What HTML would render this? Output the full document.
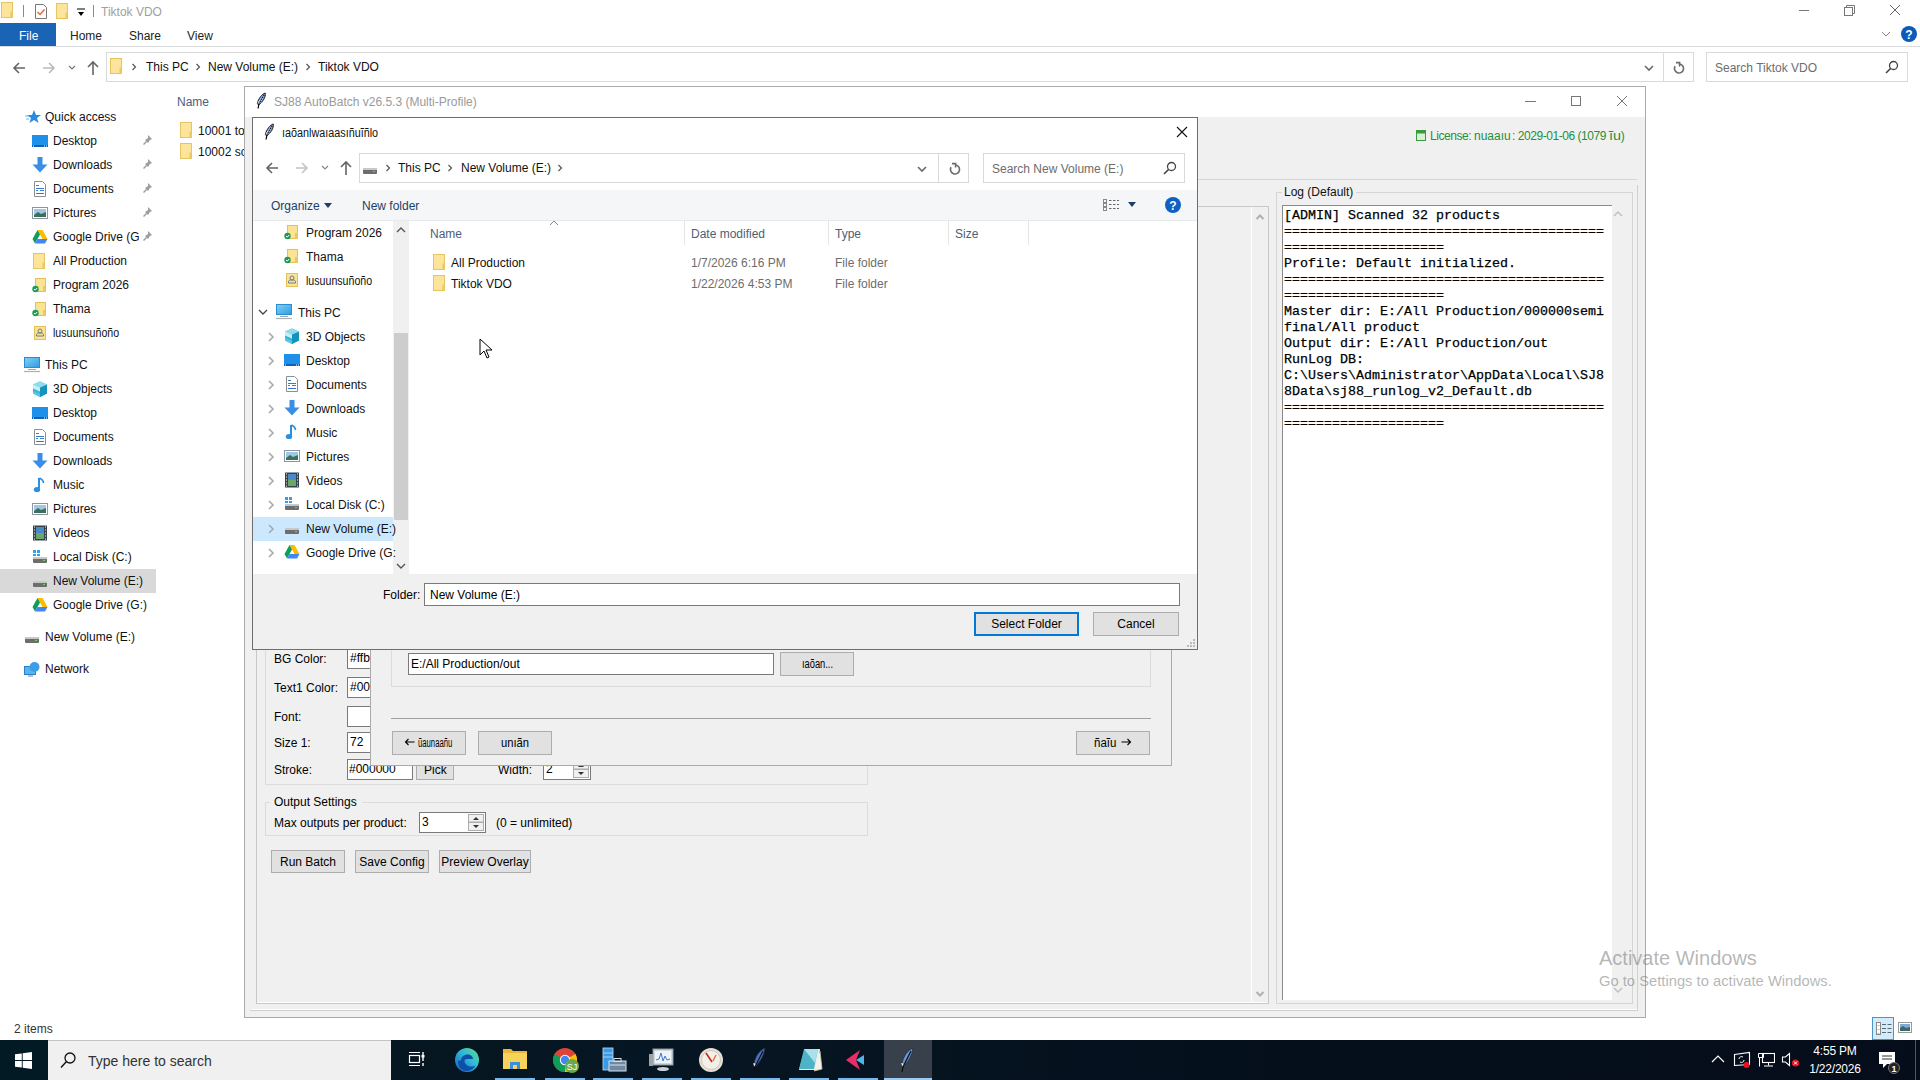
<!DOCTYPE html><html><head><meta charset="utf-8"><style>
*{margin:0;padding:0;box-sizing:border-box}
html,body{width:1920px;height:1080px;overflow:hidden;background:#fff;position:relative;font-family:"Liberation Sans",sans-serif;font-size:12px;color:#000}
.a{position:absolute}
.t{position:absolute;white-space:nowrap;line-height:16px;font-size:12px}
.m{position:absolute;white-space:pre;font-family:"Liberation Mono",monospace;font-size:13.33px;line-height:16px;color:#000;-webkit-text-stroke:0.25px #000}
</style></head><body>
<svg class="a" style="left:0px;top:2px;" width="16" height="16" viewBox="0 0 16 16"><rect x="1.5" y="0.5" width="11" height="15" fill="#fce49a" stroke="#e6c462"/><path d="M10.5 9.5h2.5v6.5h-2.5z" fill="#ecc95a"/></svg>
<div class="a" style="left:23px;top:5px;width:1px;height:12px;background:#8a8a8a"></div>
<svg class="a" style="left:34px;top:3px;" width="14" height="17" viewBox="0 0 14 17"><path d="M1.5 1.5h8l3 3v11h-11z" fill="#fff" stroke="#777"/><path d="M3.5 9l2.5 2.5 4.5-5" stroke="#e8653a" stroke-width="1.5" fill="none"/></svg>
<svg class="a" style="left:55px;top:3px;" width="16" height="16" viewBox="0 0 16 16"><rect x="1.5" y="0.5" width="11" height="15" fill="#fce49a" stroke="#e6c462"/><path d="M10.5 9.5h2.5v6.5h-2.5z" fill="#ecc95a"/></svg>
<svg class="a" style="left:76px;top:7px;" width="10" height="10" viewBox="0 0 10 10"><path d="M1 2h8" stroke="#000" stroke-width="1"/><path d="M2 5h6l-3 4z" fill="#000"/></svg>
<div class="a" style="left:93px;top:5px;width:1px;height:12px;background:#8a8a8a"></div>
<div class="t" style="left:101px;top:4px;color:#a0a0a0;font-size:12px">Tiktok VDO</div>
<div class="a" style="left:1799px;top:10px;width:10px;height:1px;background:#777"></div>
<svg class="a" style="left:1844px;top:5px;" width="11" height="11" viewBox="0 0 11 11"><rect x="0.5" y="2.5" width="8" height="8" fill="none" stroke="#777"/><path d="M2.5 2.5v-2h8v8h-2" fill="none" stroke="#777"/></svg>
<svg class="a" style="left:1889px;top:4px;" width="12" height="12" viewBox="0 0 12 12"><path d="M1 1l10 10M11 1L1 11" stroke="#666" stroke-width="1"/></svg>
<div class="a" style="left:0px;top:23px;width:56px;height:23px;background:#1a64b6"></div>
<div class="t" style="left:19px;top:28px;color:#fff">File</div>
<div class="t" style="left:70px;top:28px;color:#222">Home</div>
<div class="t" style="left:129px;top:28px;color:#222">Share</div>
<div class="t" style="left:187px;top:28px;color:#222">View</div>
<div class="a" style="left:0px;top:46px;width:1920px;height:1px;background:#dadbdc"></div>
<svg class="a" style="left:1881px;top:30px;" width="10" height="8" viewBox="0 0 10 8"><path d="M1 2l4 4 4-4" stroke="#888" fill="none"/></svg>
<svg class="a" style="left:1901px;top:26px;" width="16" height="16" viewBox="0 0 16 16"><circle cx="8" cy="8" r="8" fill="#0d5bb8"/><text x="8" y="12.5" text-anchor="middle" font-family="Liberation Sans" font-weight="bold" font-size="12" fill="#fff">?</text></svg>
<svg class="a" style="left:12px;top:61px;" width="14" height="14" viewBox="0 0 14 14"><path d="M13 7H2M7 2L2 7l5 5" stroke="#666" stroke-width="1.6" fill="none"/></svg>
<svg class="a" style="left:42px;top:61px;" width="14" height="14" viewBox="0 0 14 14"><path d="M1 7h11M7 2l5 5-5 5" stroke="#bbb" stroke-width="1.6" fill="none"/></svg>
<svg class="a" style="left:68px;top:65px;" width="8" height="6" viewBox="0 0 8 6"><path d="M1 1l3 3 3-3" stroke="#777" stroke-width="1.2" fill="none"/></svg>
<svg class="a" style="left:86px;top:60px;" width="14" height="16" viewBox="0 0 14 16"><path d="M7 15V2M2 7l5-5 5 5" stroke="#666" stroke-width="1.6" fill="none"/></svg>
<div class="a" style="left:106px;top:52px;width:1588px;height:30px;border:1px solid #d9d9d9;background:#fff"></div>
<svg class="a" style="left:109px;top:58px;" width="16" height="16" viewBox="0 0 16 16"><rect x="1.5" y="0.5" width="11" height="15" fill="#fce49a" stroke="#e6c462"/><path d="M10.5 9.5h2.5v6.5h-2.5z" fill="#ecc95a"/></svg>
<svg class="a" style="left:131px;top:63px;" width="6" height="8" viewBox="0 0 6 8"><path d="M1.5 1l3 3-3 3" stroke="#555" stroke-width="1.2" fill="none"/></svg>
<div class="t" style="left:146px;top:59px;color:#111">This PC</div>
<svg class="a" style="left:195px;top:63px;" width="6" height="8" viewBox="0 0 6 8"><path d="M1.5 1l3 3-3 3" stroke="#555" stroke-width="1.2" fill="none"/></svg>
<div class="t" style="left:208px;top:59px;color:#111">New Volume (E:)</div>
<svg class="a" style="left:305px;top:63px;" width="6" height="8" viewBox="0 0 6 8"><path d="M1.5 1l3 3-3 3" stroke="#555" stroke-width="1.2" fill="none"/></svg>
<div class="t" style="left:318px;top:59px;color:#111">Tiktok VDO</div>
<svg class="a" style="left:1644px;top:64px;" width="10" height="8" viewBox="0 0 10 8"><path d="M1 2l4 4 4-4" stroke="#6a6a6a" stroke-width="1.6" fill="none"/></svg>
<div class="a" style="left:1663px;top:52px;width:1px;height:30px;background:#d9d9d9"></div>
<svg class="a" style="left:1672px;top:60px;" width="14" height="14" viewBox="0 0 14 14"><path d="M7 4A4.5 4.5 0 1 1 3.1 6.25" stroke="#6a6a6a" stroke-width="1.6" fill="none"/><path d="M4 2.6h3.6v3.8" stroke="#6a6a6a" stroke-width="1.6" fill="none"/></svg>
<div class="a" style="left:1706px;top:52px;width:202px;height:30px;border:1px solid #d9d9d9;background:#fff"></div>
<div class="t" style="left:1715px;top:60px;color:#6d6d6d">Search Tiktok VDO</div>
<svg class="a" style="left:1885px;top:60px;" width="14" height="14" viewBox="0 0 14 14"><circle cx="8.5" cy="5.5" r="4" stroke="#444" stroke-width="1.3" fill="none"/><path d="M5.5 8.5L1 13" stroke="#444" stroke-width="1.6"/></svg>
<svg class="a" style="left:25px;top:109px;" width="16" height="16" viewBox="0 0 16 16"><path d="M9 1l2 5h5l-4 3 1.5 5L9 11l-4.5 3L6 9 2 6h5z" fill="#2a8be0"/><path d="M0 7h4M1 10h3" stroke="#6fb4ee"/></svg>
<div class="t" style="left:45px;top:109px;color:#111">Quick access</div>
<svg class="a" style="left:32px;top:133px;" width="16" height="16" viewBox="0 0 16 16"><rect x="0" y="2" width="16" height="12" fill="#1e90ea"/><rect x="0" y="12" width="16" height="2" fill="#0d62b8"/><rect x="1" y="12.5" width="1" height="1" fill="#fff"/><rect x="12" y="12.5" width="1" height="1" fill="#fff"/><rect x="14" y="12.5" width="1" height="1" fill="#fff"/></svg>
<div class="t" style="left:53px;top:133px;color:#111;width:86px;overflow:hidden">Desktop</div>
<svg class="a" style="left:141px;top:134px;" width="12" height="12" viewBox="0 0 12 12"><path d="M7 1l4 4-2 1-2 3-1-1-3 3-1-1 3-3-1-1 3-2z" fill="#9aa0a6"/></svg>
<svg class="a" style="left:32px;top:157px;" width="16" height="16" viewBox="0 0 16 16"><path d="M5.5 0h5v7.5h5L8 15.5 0.5 7.5h5z" fill="#3a8ee6"/></svg>
<div class="t" style="left:53px;top:157px;color:#111;width:86px;overflow:hidden">Downloads</div>
<svg class="a" style="left:141px;top:158px;" width="12" height="12" viewBox="0 0 12 12"><path d="M7 1l4 4-2 1-2 3-1-1-3 3-1-1 3-3-1-1 3-2z" fill="#9aa0a6"/></svg>
<svg class="a" style="left:32px;top:181px;" width="16" height="16" viewBox="0 0 16 16"><path d="M2.5 0.5h8l3 3v12h-11z" fill="#fff" stroke="#8a8f96"/><path d="M4 4.5h3M4 7.5h8M4 9.5h2M8 9.5h4M4 12.5h8" stroke="#3a7bd0" stroke-width="1"/></svg>
<div class="t" style="left:53px;top:181px;color:#111;width:86px;overflow:hidden">Documents</div>
<svg class="a" style="left:141px;top:182px;" width="12" height="12" viewBox="0 0 12 12"><path d="M7 1l4 4-2 1-2 3-1-1-3 3-1-1 3-3-1-1 3-2z" fill="#9aa0a6"/></svg>
<svg class="a" style="left:32px;top:205px;" width="16" height="16" viewBox="0 0 16 16"><rect x="0.5" y="2.5" width="15" height="11" fill="#fff" stroke="#8a96a3"/><rect x="2" y="4" width="12" height="8" fill="#9fc7e6"/><path d="M2 10l4-3 3 2 5-2v5H2z" fill="#3e6e5c"/></svg>
<div class="t" style="left:53px;top:205px;color:#111;width:86px;overflow:hidden">Pictures</div>
<svg class="a" style="left:141px;top:206px;" width="12" height="12" viewBox="0 0 12 12"><path d="M7 1l4 4-2 1-2 3-1-1-3 3-1-1 3-3-1-1 3-2z" fill="#9aa0a6"/></svg>
<svg class="a" style="left:32px;top:229px;" width="16" height="16" viewBox="0 0 16 16"><path d="M5.5 1h5l5 9h-5z" fill="#fbbc04"/><path d="M5.5 1L0.5 10l2.5 4.5 5-9z" fill="#0f9d58"/><path d="M3 14.5h10l2.5-4.5H5.5z" fill="#4285f4"/></svg>
<div class="t" style="left:53px;top:229px;color:#111;width:86px;overflow:hidden">Google Drive (G:</div>
<svg class="a" style="left:141px;top:230px;" width="12" height="12" viewBox="0 0 12 12"><path d="M7 1l4 4-2 1-2 3-1-1-3 3-1-1 3-3-1-1 3-2z" fill="#9aa0a6"/></svg>
<svg class="a" style="left:32px;top:253px;" width="16" height="16" viewBox="0 0 16 16"><rect x="1.5" y="0.5" width="11" height="15" fill="#fce49a" stroke="#e6c462"/><path d="M10.5 9.5h2.5v6.5h-2.5z" fill="#ecc95a"/></svg>
<div class="t" style="left:53px;top:253px;color:#111">All Production</div>
<svg class="a" style="left:32px;top:277px;" width="16" height="16" viewBox="0 0 16 16"><rect x="3.5" y="1.5" width="10" height="13" fill="#fbe394" stroke="#e4c05a"/><rect x="11" y="9" width="3" height="6" fill="#e9c85e"/><circle cx="3.5" cy="12" r="3.2" fill="#1c9a5a"/><path d="M2 12l1.2 1.2 2-2.2" stroke="#fff" stroke-width="1" fill="none"/></svg>
<div class="t" style="left:53px;top:277px;color:#111">Program 2026</div>
<svg class="a" style="left:32px;top:301px;" width="16" height="16" viewBox="0 0 16 16"><rect x="3.5" y="1.5" width="10" height="13" fill="#fbe394" stroke="#e4c05a"/><rect x="11" y="9" width="3" height="6" fill="#e9c85e"/><circle cx="3.5" cy="12" r="3.2" fill="#1c9a5a"/><path d="M2 12l1.2 1.2 2-2.2" stroke="#fff" stroke-width="1" fill="none"/></svg>
<div class="t" style="left:53px;top:301px;color:#111">Thama</div>
<svg class="a" style="left:32px;top:325px;" width="16" height="16" viewBox="0 0 16 16"><rect x="2.5" y="1.5" width="11" height="13" fill="#fbe394" stroke="#e4c05a"/><circle cx="8" cy="6" r="2" fill="none" stroke="#6d7c8c"/><path d="M4.5 11h7v-1.5c0-1-1-1.5-3.5-1.5s-3.5.5-3.5 1.5z" fill="none" stroke="#6d7c8c"/></svg>
<div class="t" style="left:53px;top:325px;color:#111"><span style="display:inline-block;width:69px;white-space:nowrap;vertical-align:baseline"><span style="display:inline-block;transform:scaleX(0.885);transform-origin:0 0;letter-spacing:0">lusuunsuñoño</span></span></div>
<svg class="a" style="left:24px;top:357px;" width="16" height="16" viewBox="0 0 16 16"><defs><linearGradient id="pcg" x1="0" y1="0" x2="1" y2="1"><stop offset="0" stop-color="#7fd3f7"/><stop offset="1" stop-color="#2f9be0"/></linearGradient></defs><rect x="0.5" y="0.5" width="15" height="10" fill="url(#pcg)" stroke="#2c8ccf"/><path d="M4 12.5h8" stroke="#9ab" stroke-width="1"/><path d="M0 14.5h16" stroke="#a8b0b8" stroke-width="1.2"/></svg>
<div class="t" style="left:45px;top:357px;color:#111">This PC</div>
<div class="a" style="left:0px;top:569px;width:156px;height:24px;background:#d9d9d9"></div>
<svg class="a" style="left:32px;top:381px;" width="16" height="16" viewBox="0 0 16 16"><path d="M8 0.5l7 3v9l-7 3.5-7-3.5v-9z" fill="#36b6d8"/><path d="M8 6.5l7-3v9l-7 3.5z" fill="#1393bd"/><path d="M1 3.5l7 3 7-3-7-3z" fill="#8fdcef"/><path d="M1 3.5l7 3v4L1 7.5z" fill="#c6eef7"/><path d="M1 10l7 3v3L1 12.5z" fill="#5cc6e0"/></svg>
<div class="t" style="left:53px;top:381px;color:#111">3D Objects</div>
<svg class="a" style="left:32px;top:405px;" width="16" height="16" viewBox="0 0 16 16"><rect x="0" y="2" width="16" height="12" fill="#1e90ea"/><rect x="0" y="12" width="16" height="2" fill="#0d62b8"/><rect x="1" y="12.5" width="1" height="1" fill="#fff"/><rect x="12" y="12.5" width="1" height="1" fill="#fff"/><rect x="14" y="12.5" width="1" height="1" fill="#fff"/></svg>
<div class="t" style="left:53px;top:405px;color:#111">Desktop</div>
<svg class="a" style="left:32px;top:429px;" width="16" height="16" viewBox="0 0 16 16"><path d="M2.5 0.5h8l3 3v12h-11z" fill="#fff" stroke="#8a8f96"/><path d="M4 4.5h3M4 7.5h8M4 9.5h2M8 9.5h4M4 12.5h8" stroke="#3a7bd0" stroke-width="1"/></svg>
<div class="t" style="left:53px;top:429px;color:#111">Documents</div>
<svg class="a" style="left:32px;top:453px;" width="16" height="16" viewBox="0 0 16 16"><path d="M5.5 0h5v7.5h5L8 15.5 0.5 7.5h5z" fill="#3a8ee6"/></svg>
<div class="t" style="left:53px;top:453px;color:#111">Downloads</div>
<svg class="a" style="left:32px;top:477px;" width="16" height="16" viewBox="0 0 16 16"><path d="M7 1v10.5" stroke="#2b8fe0" stroke-width="2"/><ellipse cx="5" cy="12.5" rx="3.2" ry="2.6" fill="#2b8fe0"/><path d="M7.5 1c2 1 4 2.5 4 5" stroke="#2b8fe0" stroke-width="1.6" fill="none"/></svg>
<div class="t" style="left:53px;top:477px;color:#111">Music</div>
<svg class="a" style="left:32px;top:501px;" width="16" height="16" viewBox="0 0 16 16"><rect x="0.5" y="2.5" width="15" height="11" fill="#fff" stroke="#8a96a3"/><rect x="2" y="4" width="12" height="8" fill="#9fc7e6"/><path d="M2 10l4-3 3 2 5-2v5H2z" fill="#3e6e5c"/></svg>
<div class="t" style="left:53px;top:501px;color:#111">Pictures</div>
<svg class="a" style="left:32px;top:525px;" width="16" height="16" viewBox="0 0 16 16"><rect x="1" y="0.5" width="14" height="15" fill="#35424e"/><rect x="4" y="2" width="8" height="12" fill="#4b89c9"/><rect x="4" y="8" width="8" height="6" fill="#6aa86a"/><path d="M2 2h1M2 5h1M2 8h1M2 11h1M2 14h1M13 2h1M13 5h1M13 8h1M13 11h1M13 14h1" stroke="#fff" stroke-width="1"/></svg>
<div class="t" style="left:53px;top:525px;color:#111">Videos</div>
<svg class="a" style="left:32px;top:549px;" width="16" height="16" viewBox="0 0 16 16"><rect x="1" y="9" width="14" height="5" rx="1" fill="#6d6d6d"/><rect x="1" y="8" width="14" height="2" fill="#c8c8c8"/><rect x="11" y="11" width="2" height="1" fill="#4ee04e"/><rect x="1" y="1" width="3" height="3" fill="#2ea0ef"/><rect x="5" y="1" width="3" height="3" fill="#2ea0ef"/><rect x="1" y="5" width="3" height="2" fill="#2ea0ef"/><rect x="5" y="5" width="3" height="2" fill="#2ea0ef"/></svg>
<div class="t" style="left:53px;top:549px;color:#111">Local Disk (C:)</div>
<svg class="a" style="left:32px;top:573px;" width="16" height="16" viewBox="0 0 16 16"><rect x="1" y="9" width="14" height="5" rx="1" fill="#6d6d6d"/><rect x="1" y="8" width="14" height="2" fill="#c8c8c8"/><rect x="11" y="11" width="2" height="1" fill="#4ee04e"/></svg>
<div class="t" style="left:53px;top:573px;color:#111">New Volume (E:)</div>
<svg class="a" style="left:32px;top:597px;" width="16" height="16" viewBox="0 0 16 16"><path d="M5.5 1h5l5 9h-5z" fill="#fbbc04"/><path d="M5.5 1L0.5 10l2.5 4.5 5-9z" fill="#0f9d58"/><path d="M3 14.5h10l2.5-4.5H5.5z" fill="#4285f4"/></svg>
<div class="t" style="left:53px;top:597px;color:#111">Google Drive (G:)</div>
<svg class="a" style="left:24px;top:629px;" width="16" height="16" viewBox="0 0 16 16"><rect x="1" y="9" width="14" height="5" rx="1" fill="#6d6d6d"/><rect x="1" y="8" width="14" height="2" fill="#c8c8c8"/><rect x="11" y="11" width="2" height="1" fill="#4ee04e"/></svg>
<div class="t" style="left:45px;top:629px;color:#111">New Volume (E:)</div>
<svg class="a" style="left:24px;top:661px;" width="16" height="16" viewBox="0 0 16 16"><rect x="0.5" y="5.5" width="11" height="8" fill="#5ab3f0" stroke="#2b7fc8"/><circle cx="10.5" cy="6" r="5" fill="#3c9ee8"/><path d="M4 15h5" stroke="#6a8aa8"/></svg>
<div class="t" style="left:45px;top:661px;color:#111">Network</div>
<div class="t" style="left:177px;top:94px;color:#4c607a">Name</div>
<svg class="a" style="left:179px;top:122px;" width="16" height="16" viewBox="0 0 16 16"><rect x="1.5" y="0.5" width="11" height="15" fill="#fce49a" stroke="#e6c462"/><path d="M10.5 9.5h2.5v6.5h-2.5z" fill="#ecc95a"/></svg>
<div class="t" style="left:198px;top:123px;color:#111">10001 toe</div>
<svg class="a" style="left:179px;top:143px;" width="16" height="16" viewBox="0 0 16 16"><rect x="1.5" y="0.5" width="11" height="15" fill="#fce49a" stroke="#e6c462"/><path d="M10.5 9.5h2.5v6.5h-2.5z" fill="#ecc95a"/></svg>
<div class="t" style="left:198px;top:144px;color:#111">10002 sol</div>
<div class="t" style="left:14px;top:1021px;color:#333">2 items</div>
<div class="a" style="left:1872px;top:1017px;width:22px;height:23px;background:#d3ecfb;border:1px solid #4b95c8"></div>
<svg class="a" style="left:1875px;top:1021px;" width="17" height="15" viewBox="0 0 17 15"><rect x="1.5" y="1.5" width="4" height="12" fill="#fff" stroke="#8a8a8a"/><path d="M2.5 4.5h2M2.5 8.5h2M2.5 12.5h2" stroke="#bbb"/><path d="M7 3.5h4M12.5 3.5h4M7 7.5h4M12.5 7.5h4M7 11.5h4M12.5 11.5h4" stroke="#5a6a74" stroke-width="1.2"/></svg>
<svg class="a" style="left:1898px;top:1022px;" width="14" height="11" viewBox="0 0 14 11"><rect x="0.5" y="0.5" width="13" height="10" fill="#fff" stroke="#9a9a9a"/><rect x="2" y="2" width="10" height="7" fill="#7fa9d8"/><path d="M2 6l3-2 3 2 4-1v4H2z" fill="#3b6a60"/></svg>
<div class="a" style="left:244px;top:86px;width:1402px;height:932px;border:1px solid #aaaaaa;background:#f0f0f0"></div>
<div class="a" style="left:245px;top:87px;width:1400px;height:30px;background:#fff"></div>
<svg class="a" style="left:256px;top:92px;" width="12" height="17" viewBox="0 0 12 17"><path d="M9.2 1C6.5 1.8 2.2 6.5 1.3 11.8l1.4 1C6.8 9.8 10 5 9.2 1z" fill="#93b6ea" stroke="#000" stroke-width="0.9"/><path d="M2 11.5c.5-1.5 1-2.5 1.5-3" stroke="#fff" stroke-width="1"/><path d="M8.2 2.8L3.2 11" stroke="#000" stroke-width="1.1" stroke-dasharray="1.3 1"/><path d="M3 11.5l-.9 5" stroke="#000" stroke-width="1.2"/></svg>
<div class="t" style="left:274px;top:94px;color:#9a9a9a">SJ88 AutoBatch v26.5.3 (Multi-Profile)</div>
<div class="a" style="left:1525px;top:101px;width:11px;height:1px;background:#777"></div>
<div class="a" style="left:1571px;top:96px;width:10px;height:10px;border:1px solid #777"></div>
<svg class="a" style="left:1616px;top:95px;" width="12" height="12" viewBox="0 0 12 12"><path d="M1 1l10 10M11 1L1 11" stroke="#777" stroke-width="1"/></svg>
<svg class="a" style="left:1416px;top:129px;" width="11" height="12" viewBox="0 0 11 12"><rect x="0.5" y="1.5" width="9" height="10" fill="#d7f0d7" stroke="#3a9c3a"/><rect x="0.5" y="1.5" width="9" height="3" fill="#3a9c3a"/></svg>
<div class="t" style="left:1430px;top:128px;color:#22913a;letter-spacing:-0.45px;width:204px;overflow:hidden">License: <span style="display:inline-block;width:38px;white-space:nowrap;vertical-align:baseline"><span style="display:inline-block;transform:scaleX(1.000);transform-origin:0 0;letter-spacing:0">nuaaıu</span></span>: 2029-01-06 (1079 <span style="display:inline-block;width:12px;white-space:nowrap;vertical-align:baseline"><span style="display:inline-block;transform:scaleX(1.200);transform-origin:0 0;letter-spacing:0">ĩu</span></span>)</div>
<div class="a" style="left:1197px;top:179px;width:440px;height:1px;background:#d5d5d5"></div>
<div class="a" style="left:250px;top:185px;width:1388px;height:826px;border-right:1px solid #d0d0d0;border-bottom:1px solid #d0d0d0"></div>
<div class="a" style="left:256px;top:206px;width:1013px;height:798px;border:1px solid #c8c8c8"></div>
<div class="a" style="left:1251px;top:207px;width:1px;height:796px;background:#fff"></div>
<svg class="a" style="left:1254px;top:213px;" width="12" height="8" viewBox="0 0 12 8"><path d="M2.5 6l3.5-3.5 3.5 3.5" stroke="#b0b0b0" stroke-width="2" fill="none"/></svg>
<svg class="a" style="left:1254px;top:990px;" width="12" height="8" viewBox="0 0 12 8"><path d="M2.5 2l3.5 3.5 3.5-3.5" stroke="#b0b0b0" stroke-width="2" fill="none"/></svg>
<div class="a" style="left:257px;top:1002px;width:1011px;height:1px;background:#fff"></div>
<div class="a" style="left:251px;top:1009px;width:1386px;height:1px;background:#fff"></div>
<div class="a" style="left:1276px;top:192px;width:357px;height:812px;border:1px solid #d5d5d5"></div>
<div class="a" style="left:1282px;top:183px;width:74px;height:16px;background:#f0f0f0"></div>
<div class="t" style="left:1284px;top:184px;color:#111">Log (Default)</div>
<div class="a" style="left:1282px;top:205px;width:330px;height:795px;background:#fff;border-left:1px solid #8a8a8a;border-top:1px solid #8a8a8a"></div>
<svg class="a" style="left:1612px;top:210px;" width="12" height="8" viewBox="0 0 12 8"><path d="M2 6l4-4 4 4" stroke="#c0c0c0" stroke-width="1.5" fill="none"/></svg>
<svg class="a" style="left:1612px;top:986px;" width="12" height="8" viewBox="0 0 12 8"><path d="M2 2l4 4 4-4" stroke="#c0c0c0" stroke-width="1.5" fill="none"/></svg>
<div class="m" style="left:1284px;top:208px">[ADMIN] Scanned 32 products</div>
<div class="m" style="left:1284px;top:224px">========================================</div>
<div class="m" style="left:1284px;top:240px">====================</div>
<div class="m" style="left:1284px;top:256px">Profile: Default initialized.</div>
<div class="m" style="left:1284px;top:272px">========================================</div>
<div class="m" style="left:1284px;top:288px">====================</div>
<div class="m" style="left:1284px;top:304px">Master dir: E:/All Production/000000semi</div>
<div class="m" style="left:1284px;top:320px">final/All product</div>
<div class="m" style="left:1284px;top:336px">Output dir: E:/All Production/out</div>
<div class="m" style="left:1284px;top:352px">RunLog DB:</div>
<div class="m" style="left:1284px;top:368px">C:\Users\Administrator\AppData\Local\SJ8</div>
<div class="m" style="left:1284px;top:384px">8Data\sj88_runlog_v2_Default.db</div>
<div class="m" style="left:1284px;top:400px">========================================</div>
<div class="m" style="left:1284px;top:416px">====================</div>
<div class="a" style="left:265px;top:640px;width:603px;height:145px;border:1px solid #dcdcdc"></div>
<div class="t" style="left:274px;top:651px;">BG Color:</div>
<div class="a" style="left:347px;top:648px;width:30px;height:21px;background:#fff;border:1px solid #7a7a7a"></div>
<div class="t" style="left:350px;top:650px;">#ffb</div>
<div class="t" style="left:274px;top:680px;">Text1 Color:</div>
<div class="a" style="left:347px;top:677px;width:30px;height:21px;background:#fff;border:1px solid #7a7a7a"></div>
<div class="t" style="left:350px;top:679px;">#000</div>
<div class="t" style="left:274px;top:709px;">Font:</div>
<div class="a" style="left:347px;top:706px;width:30px;height:21px;background:#fff;border:1px solid #7a7a7a"></div>
<div class="t" style="left:274px;top:735px;">Size 1:</div>
<div class="a" style="left:347px;top:732px;width:30px;height:21px;background:#fff;border:1px solid #7a7a7a"></div>
<div class="t" style="left:350px;top:734px;">72</div>
<div class="t" style="left:274px;top:762px;">Stroke:</div>
<div class="a" style="left:347px;top:759px;width:66px;height:21px;background:#fff;border:1px solid #7a7a7a"></div>
<div class="t" style="left:349px;top:761px;">#000000</div>
<div class="a" style="left:416px;top:759px;width:38px;height:21px;background:#e1e1e1;border:1px solid #adadad"></div>
<div class="t" style="left:424px;top:762px;">Pick</div>
<div class="t" style="left:498px;top:762px;">Width:</div>
<div class="a" style="left:543px;top:759px;width:48px;height:21px;background:#fff;border:1px solid #7a7a7a"></div>
<div class="t" style="left:546px;top:761px;">2</div>
<svg class="a" style="left:573px;top:761px;" width="16" height="17" viewBox="0 0 16 17"><rect x="0.5" y="0.5" width="15" height="7.5" fill="#f0f0f0" stroke="#adadad"/><rect x="0.5" y="8.5" width="15" height="8" fill="#f0f0f0" stroke="#adadad"/><path d="M5 6l3-3 3 3z" fill="#333"/><path d="M5 11l3 3 3-3z" fill="#333"/></svg>
<div class="t" style="left:274px;top:794px;">Output Settings</div>
<div class="a" style="left:265px;top:802px;width:603px;height:34px;border:1px solid #dcdcdc;border-top:none"></div>
<div class="a" style="left:265px;top:802px;width:5px;height:1px;background:#dcdcdc"></div>
<div class="a" style="left:362px;top:802px;width:506px;height:1px;background:#dcdcdc"></div>
<div class="t" style="left:274px;top:815px;">Max outputs per product:</div>
<div class="a" style="left:419px;top:812px;width:67px;height:21px;background:#fff;border:1px solid #7a7a7a"></div>
<div class="t" style="left:422px;top:814px;">3</div>
<svg class="a" style="left:468px;top:814px;" width="16" height="17" viewBox="0 0 16 17"><rect x="0.5" y="0.5" width="15" height="7.5" fill="#f0f0f0" stroke="#adadad"/><rect x="0.5" y="8.5" width="15" height="8" fill="#f0f0f0" stroke="#adadad"/><path d="M5 6l3-3 3 3z" fill="#333"/><path d="M5 11l3 3 3-3z" fill="#333"/></svg>
<div class="t" style="left:496px;top:815px;">(0 = unlimited)</div>
<div class="a" style="left:271px;top:850px;width:74px;height:23px;background:#e1e1e1;border:1px solid #adadad"></div>
<div class="t" style="left:271px;top:854px;width:74px;text-align:center">Run Batch</div>
<div class="a" style="left:355px;top:850px;width:74px;height:23px;background:#e1e1e1;border:1px solid #adadad"></div>
<div class="t" style="left:355px;top:854px;width:74px;text-align:center">Save Config</div>
<div class="a" style="left:439px;top:850px;width:92px;height:23px;background:#e1e1e1;border:1px solid #adadad"></div>
<div class="t" style="left:439px;top:854px;width:92px;text-align:center">Preview Overlay</div>
<div class="a" style="left:370px;top:600px;width:802px;height:166px;background:#f0f0f0;border:1px solid #aaaaaa;border-top:none"></div>
<div class="a" style="left:391px;top:600px;width:760px;height:87px;border:1px solid #dcdcdc;border-top:none"></div>
<div class="a" style="left:408px;top:653px;width:366px;height:22px;background:#fff;border:1px solid #7a7a7a"></div>
<div class="t" style="left:411px;top:656px;">E:/All Production/out</div>
<div class="a" style="left:780px;top:652px;width:74px;height:24px;background:#e1e1e1;border:1px solid #adadad"></div>
<div class="t" style="left:780px;top:656px;width:74px;text-align:center"><span style="display:inline-block;width:31px;white-space:nowrap;vertical-align:baseline"><span style="display:inline-block;transform:scaleX(0.775);transform-origin:0 0;letter-spacing:0">ıaõan...</span></span></div>
<div class="a" style="left:391px;top:718px;width:760px;height:1px;background:#a0a0a0"></div>
<div class="a" style="left:392px;top:731px;width:74px;height:24px;background:#e1e1e1;border:1px solid #adadad"></div>
<div class="t" style="left:392px;top:735px;width:74px;text-align:center"><svg width="11" height="8" viewBox="0 0 11 8" style="vertical-align:1px"><path d="M10.5 4H1.5M4.5 1L1.5 4l3 3" stroke="#000" stroke-width="1.1" fill="none"/></svg> <span style="display:inline-block;width:36px;white-space:nowrap;vertical-align:baseline"><span style="display:inline-block;transform:scaleX(0.643);transform-origin:0 0;letter-spacing:0">ũaunaañu</span></span></div>
<div class="a" style="left:478px;top:731px;width:74px;height:24px;background:#e1e1e1;border:1px solid #adadad"></div>
<div class="t" style="left:478px;top:735px;width:74px;text-align:center"><span style="display:inline-block;width:29px;white-space:nowrap;vertical-align:baseline"><span style="display:inline-block;transform:scaleX(0.935);transform-origin:0 0;letter-spacing:0">unıãn</span></span></div>
<div class="a" style="left:1076px;top:731px;width:74px;height:24px;background:#e1e1e1;border:1px solid #adadad"></div>
<div class="t" style="left:1076px;top:735px;width:74px;text-align:center"><span style="display:inline-block;width:23px;white-space:nowrap;vertical-align:baseline"><span style="display:inline-block;transform:scaleX(0.958);transform-origin:0 0;letter-spacing:0">ñaĩu</span></span> <svg width="11" height="8" viewBox="0 0 11 8" style="vertical-align:1px"><path d="M0.5 4h9M6.5 1l3 3-3 3" stroke="#000" stroke-width="1.1" fill="none"/></svg></div>
<div class="a" style="left:252px;top:117px;width:946px;height:533px;background:#f0f0f0;border:1px solid #6e6e6e"></div>
<div class="a" style="left:253px;top:118px;width:944px;height:456px;background:#fff"></div>
<svg class="a" style="left:264px;top:123px;" width="12" height="17" viewBox="0 0 12 17"><path d="M9.2 1C6.5 1.8 2.2 6.5 1.3 11.8l1.4 1C6.8 9.8 10 5 9.2 1z" fill="#93b6ea" stroke="#000" stroke-width="0.9"/><path d="M2 11.5c.5-1.5 1-2.5 1.5-3" stroke="#fff" stroke-width="1"/><path d="M8.2 2.8L3.2 11" stroke="#000" stroke-width="1.1" stroke-dasharray="1.3 1"/><path d="M3 11.5l-.9 5" stroke="#000" stroke-width="1.2"/></svg>
<div class="t" style="left:282px;top:125px;color:#111"><span style="display:inline-block;width:99px;white-space:nowrap;vertical-align:baseline"><span style="display:inline-block;transform:scaleX(0.900);transform-origin:0 0;letter-spacing:0">ıaõanlwaıaasıñuĩñlo</span></span></div>
<svg class="a" style="left:1176px;top:126px;" width="12" height="12" viewBox="0 0 12 12"><path d="M1 1l10 10M11 1L1 11" stroke="#111" stroke-width="1.1"/></svg>
<svg class="a" style="left:265px;top:161px;" width="14" height="14" viewBox="0 0 14 14"><path d="M13 7H2M7 2L2 7l5 5" stroke="#666" stroke-width="1.6" fill="none"/></svg>
<svg class="a" style="left:295px;top:161px;" width="14" height="14" viewBox="0 0 14 14"><path d="M1 7h11M7 2l5 5-5 5" stroke="#c4c4c4" stroke-width="1.6" fill="none"/></svg>
<svg class="a" style="left:321px;top:165px;" width="8" height="6" viewBox="0 0 8 6"><path d="M1 1l3 3 3-3" stroke="#888" stroke-width="1.2" fill="none"/></svg>
<svg class="a" style="left:339px;top:160px;" width="14" height="16" viewBox="0 0 14 16"><path d="M7 15V2M2 7l5-5 5 5" stroke="#666" stroke-width="1.6" fill="none"/></svg>
<div class="a" style="left:359px;top:153px;width:580px;height:30px;border:1px solid #d9d9d9;background:#fff"></div>
<svg class="a" style="left:362px;top:160px;" width="16" height="16" viewBox="0 0 16 16"><rect x="1" y="9" width="14" height="5" rx="1" fill="#6d6d6d"/><rect x="1" y="8" width="14" height="2" fill="#c8c8c8"/><rect x="11" y="11" width="2" height="1" fill="#4ee04e"/></svg>
<svg class="a" style="left:385px;top:164px;" width="6" height="8" viewBox="0 0 6 8"><path d="M1.5 1l3 3-3 3" stroke="#555" stroke-width="1.2" fill="none"/></svg>
<div class="t" style="left:398px;top:160px;color:#111">This PC</div>
<svg class="a" style="left:447px;top:164px;" width="6" height="8" viewBox="0 0 6 8"><path d="M1.5 1l3 3-3 3" stroke="#555" stroke-width="1.2" fill="none"/></svg>
<div class="t" style="left:461px;top:160px;color:#111">New Volume (E:)</div>
<svg class="a" style="left:557px;top:164px;" width="6" height="8" viewBox="0 0 6 8"><path d="M1.5 1l3 3-3 3" stroke="#555" stroke-width="1.2" fill="none"/></svg>
<svg class="a" style="left:917px;top:165px;" width="10" height="8" viewBox="0 0 10 8"><path d="M1 2l4 4 4-4" stroke="#6a6a6a" stroke-width="1.6" fill="none"/></svg>
<div class="a" style="left:938px;top:153px;width:31px;height:30px;border:1px solid #d9d9d9;border-left:none"></div>
<svg class="a" style="left:948px;top:161px;" width="14" height="14" viewBox="0 0 14 14"><path d="M7 4A4.5 4.5 0 1 1 3.1 6.25" stroke="#6a6a6a" stroke-width="1.6" fill="none"/><path d="M4 2.6h3.6v3.8" stroke="#6a6a6a" stroke-width="1.6" fill="none"/></svg>
<div class="a" style="left:983px;top:153px;width:202px;height:30px;border:1px solid #d9d9d9;background:#fff"></div>
<div class="t" style="left:992px;top:161px;color:#6d6d6d">Search New Volume (E:)</div>
<svg class="a" style="left:1163px;top:161px;" width="14" height="14" viewBox="0 0 14 14"><circle cx="8.5" cy="5.5" r="4" stroke="#444" stroke-width="1.3" fill="none"/><path d="M5.5 8.5L1 13" stroke="#444" stroke-width="1.6"/></svg>
<div class="a" style="left:253px;top:190px;width:944px;height:31px;background:#f5f6f7;border-bottom:1px solid #e8e9ea"></div>
<div class="t" style="left:271px;top:198px;color:#1e3e66">Organize</div>
<svg class="a" style="left:324px;top:203px;" width="8" height="6" viewBox="0 0 8 6"><path d="M0 0h8l-4 5z" fill="#1e3e66"/></svg>
<div class="t" style="left:362px;top:198px;color:#1e3e66">New folder</div>
<svg class="a" style="left:1102px;top:197px;" width="18" height="16" viewBox="0 0 18 16"><rect x="1.5" y="2.5" width="3" height="3" fill="none" stroke="#888"/><rect x="1.5" y="6.5" width="3" height="3" fill="none" stroke="#888"/><rect x="1.5" y="10.5" width="3" height="3" fill="none" stroke="#888"/><path d="M7 3.5h10M7 7.5h10M7 11.5h10" stroke="#666" stroke-width="1" stroke-dasharray="2.5 1.5"/></svg>
<svg class="a" style="left:1128px;top:202px;" width="8" height="6" viewBox="0 0 8 6"><path d="M0 0h8l-4 5z" fill="#1e3e66"/></svg>
<svg class="a" style="left:1165px;top:197px;" width="16" height="16" viewBox="0 0 16 16"><circle cx="8" cy="8" r="8" fill="#0f5fc4"/><text x="8" y="12.5" text-anchor="middle" font-family="Liberation Sans" font-weight="bold" font-size="12" fill="#fff">?</text></svg>
<div class="a" style="left:393px;top:221px;width:16px;height:354px;background:#f0f0f0"></div>
<div class="a" style="left:394px;top:333px;width:14px;height:187px;background:#cdcdcd"></div>
<svg class="a" style="left:394px;top:225px;" width="14" height="10" viewBox="0 0 14 10"><path d="M3 7l4-4 4 4" stroke="#555" stroke-width="1.4" fill="none"/></svg>
<svg class="a" style="left:394px;top:561px;" width="14" height="10" viewBox="0 0 14 10"><path d="M3 3l4 4 4-4" stroke="#555" stroke-width="1.4" fill="none"/></svg>
<div class="a" style="left:253px;top:517px;width:140px;height:24px;background:#cce8ff"></div>
<svg class="a" style="left:284px;top:224px;" width="16" height="16" viewBox="0 0 16 16"><rect x="3.5" y="1.5" width="10" height="13" fill="#fbe394" stroke="#e4c05a"/><rect x="11" y="9" width="3" height="6" fill="#e9c85e"/><circle cx="3.5" cy="12" r="3.2" fill="#1c9a5a"/><path d="M2 12l1.2 1.2 2-2.2" stroke="#fff" stroke-width="1" fill="none"/></svg>
<div class="t" style="left:306px;top:225px;color:#111">Program 2026</div>
<svg class="a" style="left:284px;top:248px;" width="16" height="16" viewBox="0 0 16 16"><rect x="3.5" y="1.5" width="10" height="13" fill="#fbe394" stroke="#e4c05a"/><rect x="11" y="9" width="3" height="6" fill="#e9c85e"/><circle cx="3.5" cy="12" r="3.2" fill="#1c9a5a"/><path d="M2 12l1.2 1.2 2-2.2" stroke="#fff" stroke-width="1" fill="none"/></svg>
<div class="t" style="left:306px;top:249px;color:#111">Thama</div>
<svg class="a" style="left:284px;top:272px;" width="16" height="16" viewBox="0 0 16 16"><rect x="2.5" y="1.5" width="11" height="13" fill="#fbe394" stroke="#e4c05a"/><circle cx="8" cy="6" r="2" fill="none" stroke="#6d7c8c"/><path d="M4.5 11h7v-1.5c0-1-1-1.5-3.5-1.5s-3.5.5-3.5 1.5z" fill="none" stroke="#6d7c8c"/></svg>
<div class="t" style="left:306px;top:273px;color:#111"><span style="display:inline-block;width:69px;white-space:nowrap;vertical-align:baseline"><span style="display:inline-block;transform:scaleX(0.885);transform-origin:0 0;letter-spacing:0">lusuunsuñoño</span></span></div>
<svg class="a" style="left:257px;top:307px;" width="12" height="10" viewBox="0 0 12 10"><path d="M2 3l4 4 4-4" stroke="#444" stroke-width="1.3" fill="none"/></svg>
<svg class="a" style="left:276px;top:304px;" width="16" height="16" viewBox="0 0 16 16"><defs><linearGradient id="pcg" x1="0" y1="0" x2="1" y2="1"><stop offset="0" stop-color="#7fd3f7"/><stop offset="1" stop-color="#2f9be0"/></linearGradient></defs><rect x="0.5" y="0.5" width="15" height="10" fill="url(#pcg)" stroke="#2c8ccf"/><path d="M4 12.5h8" stroke="#9ab" stroke-width="1"/><path d="M0 14.5h16" stroke="#a8b0b8" stroke-width="1.2"/></svg>
<div class="t" style="left:298px;top:305px;color:#111">This PC</div>
<svg class="a" style="left:267px;top:332px;" width="8" height="10" viewBox="0 0 8 10"><path d="M2 1l4 4-4 4" stroke="#a6a6a6" stroke-width="1.5" fill="none"/></svg>
<svg class="a" style="left:284px;top:328px;" width="16" height="16" viewBox="0 0 16 16"><path d="M8 0.5l7 3v9l-7 3.5-7-3.5v-9z" fill="#36b6d8"/><path d="M8 6.5l7-3v9l-7 3.5z" fill="#1393bd"/><path d="M1 3.5l7 3 7-3-7-3z" fill="#8fdcef"/><path d="M1 3.5l7 3v4L1 7.5z" fill="#c6eef7"/><path d="M1 10l7 3v3L1 12.5z" fill="#5cc6e0"/></svg>
<div class="t" style="left:306px;top:329px;color:#111">3D Objects</div>
<svg class="a" style="left:267px;top:356px;" width="8" height="10" viewBox="0 0 8 10"><path d="M2 1l4 4-4 4" stroke="#a6a6a6" stroke-width="1.5" fill="none"/></svg>
<svg class="a" style="left:284px;top:352px;" width="16" height="16" viewBox="0 0 16 16"><rect x="0" y="2" width="16" height="12" fill="#1e90ea"/><rect x="0" y="12" width="16" height="2" fill="#0d62b8"/><rect x="1" y="12.5" width="1" height="1" fill="#fff"/><rect x="12" y="12.5" width="1" height="1" fill="#fff"/><rect x="14" y="12.5" width="1" height="1" fill="#fff"/></svg>
<div class="t" style="left:306px;top:353px;color:#111">Desktop</div>
<svg class="a" style="left:267px;top:380px;" width="8" height="10" viewBox="0 0 8 10"><path d="M2 1l4 4-4 4" stroke="#a6a6a6" stroke-width="1.5" fill="none"/></svg>
<svg class="a" style="left:284px;top:376px;" width="16" height="16" viewBox="0 0 16 16"><path d="M2.5 0.5h8l3 3v12h-11z" fill="#fff" stroke="#8a8f96"/><path d="M4 4.5h3M4 7.5h8M4 9.5h2M8 9.5h4M4 12.5h8" stroke="#3a7bd0" stroke-width="1"/></svg>
<div class="t" style="left:306px;top:377px;color:#111">Documents</div>
<svg class="a" style="left:267px;top:404px;" width="8" height="10" viewBox="0 0 8 10"><path d="M2 1l4 4-4 4" stroke="#a6a6a6" stroke-width="1.5" fill="none"/></svg>
<svg class="a" style="left:284px;top:400px;" width="16" height="16" viewBox="0 0 16 16"><path d="M5.5 0h5v7.5h5L8 15.5 0.5 7.5h5z" fill="#3a8ee6"/></svg>
<div class="t" style="left:306px;top:401px;color:#111">Downloads</div>
<svg class="a" style="left:267px;top:428px;" width="8" height="10" viewBox="0 0 8 10"><path d="M2 1l4 4-4 4" stroke="#a6a6a6" stroke-width="1.5" fill="none"/></svg>
<svg class="a" style="left:284px;top:424px;" width="16" height="16" viewBox="0 0 16 16"><path d="M7 1v10.5" stroke="#2b8fe0" stroke-width="2"/><ellipse cx="5" cy="12.5" rx="3.2" ry="2.6" fill="#2b8fe0"/><path d="M7.5 1c2 1 4 2.5 4 5" stroke="#2b8fe0" stroke-width="1.6" fill="none"/></svg>
<div class="t" style="left:306px;top:425px;color:#111">Music</div>
<svg class="a" style="left:267px;top:452px;" width="8" height="10" viewBox="0 0 8 10"><path d="M2 1l4 4-4 4" stroke="#a6a6a6" stroke-width="1.5" fill="none"/></svg>
<svg class="a" style="left:284px;top:448px;" width="16" height="16" viewBox="0 0 16 16"><rect x="0.5" y="2.5" width="15" height="11" fill="#fff" stroke="#8a96a3"/><rect x="2" y="4" width="12" height="8" fill="#9fc7e6"/><path d="M2 10l4-3 3 2 5-2v5H2z" fill="#3e6e5c"/></svg>
<div class="t" style="left:306px;top:449px;color:#111">Pictures</div>
<svg class="a" style="left:267px;top:476px;" width="8" height="10" viewBox="0 0 8 10"><path d="M2 1l4 4-4 4" stroke="#a6a6a6" stroke-width="1.5" fill="none"/></svg>
<svg class="a" style="left:284px;top:472px;" width="16" height="16" viewBox="0 0 16 16"><rect x="1" y="0.5" width="14" height="15" fill="#35424e"/><rect x="4" y="2" width="8" height="12" fill="#4b89c9"/><rect x="4" y="8" width="8" height="6" fill="#6aa86a"/><path d="M2 2h1M2 5h1M2 8h1M2 11h1M2 14h1M13 2h1M13 5h1M13 8h1M13 11h1M13 14h1" stroke="#fff" stroke-width="1"/></svg>
<div class="t" style="left:306px;top:473px;color:#111">Videos</div>
<svg class="a" style="left:267px;top:500px;" width="8" height="10" viewBox="0 0 8 10"><path d="M2 1l4 4-4 4" stroke="#a6a6a6" stroke-width="1.5" fill="none"/></svg>
<svg class="a" style="left:284px;top:496px;" width="16" height="16" viewBox="0 0 16 16"><rect x="1" y="9" width="14" height="5" rx="1" fill="#6d6d6d"/><rect x="1" y="8" width="14" height="2" fill="#c8c8c8"/><rect x="11" y="11" width="2" height="1" fill="#4ee04e"/><rect x="1" y="1" width="3" height="3" fill="#2ea0ef"/><rect x="5" y="1" width="3" height="3" fill="#2ea0ef"/><rect x="1" y="5" width="3" height="2" fill="#2ea0ef"/><rect x="5" y="5" width="3" height="2" fill="#2ea0ef"/></svg>
<div class="t" style="left:306px;top:497px;color:#111">Local Disk (C:)</div>
<svg class="a" style="left:267px;top:524px;" width="8" height="10" viewBox="0 0 8 10"><path d="M2 1l4 4-4 4" stroke="#a6a6a6" stroke-width="1.5" fill="none"/></svg>
<svg class="a" style="left:284px;top:520px;" width="16" height="16" viewBox="0 0 16 16"><rect x="1" y="9" width="14" height="5" rx="1" fill="#6d6d6d"/><rect x="1" y="8" width="14" height="2" fill="#c8c8c8"/><rect x="11" y="11" width="2" height="1" fill="#4ee04e"/></svg>
<div class="t" style="left:306px;top:521px;color:#111">New Volume (E:)</div>
<svg class="a" style="left:267px;top:548px;" width="8" height="10" viewBox="0 0 8 10"><path d="M2 1l4 4-4 4" stroke="#a6a6a6" stroke-width="1.5" fill="none"/></svg>
<svg class="a" style="left:284px;top:544px;" width="16" height="16" viewBox="0 0 16 16"><path d="M5.5 1h5l5 9h-5z" fill="#fbbc04"/><path d="M5.5 1L0.5 10l2.5 4.5 5-9z" fill="#0f9d58"/><path d="M3 14.5h10l2.5-4.5H5.5z" fill="#4285f4"/></svg>
<div class="t" style="left:306px;top:545px;color:#111">Google Drive (G:</div>
<div class="a" style="left:253px;top:221px;width:140px;height:354px;pointer-events:none"></div>
<svg class="a" style="left:549px;top:220px;" width="10" height="6" viewBox="0 0 10 6"><path d="M1 5l4-4 4 4" stroke="#888" fill="none"/></svg>
<div class="t" style="left:430px;top:226px;color:#4c607a">Name</div>
<div class="a" style="left:684px;top:221px;width:1px;height:24px;background:#e5e5e5"></div>
<div class="t" style="left:691px;top:226px;color:#4c607a">Date modified</div>
<div class="a" style="left:828px;top:221px;width:1px;height:24px;background:#e5e5e5"></div>
<div class="t" style="left:835px;top:226px;color:#4c607a">Type</div>
<div class="a" style="left:948px;top:221px;width:1px;height:24px;background:#e5e5e5"></div>
<div class="t" style="left:955px;top:226px;color:#4c607a">Size</div>
<div class="a" style="left:1028px;top:221px;width:1px;height:24px;background:#e5e5e5"></div>
<svg class="a" style="left:432px;top:254px;" width="16" height="16" viewBox="0 0 16 16"><rect x="1.5" y="0.5" width="11" height="15" fill="#fce49a" stroke="#e6c462"/><path d="M10.5 9.5h2.5v6.5h-2.5z" fill="#ecc95a"/></svg>
<div class="t" style="left:451px;top:255px;color:#111">All Production</div>
<div class="t" style="left:691px;top:255px;color:#6d6d6d">1/7/2026 6:16 PM</div>
<div class="t" style="left:835px;top:255px;color:#6d6d6d">File folder</div>
<svg class="a" style="left:432px;top:275px;" width="16" height="16" viewBox="0 0 16 16"><rect x="1.5" y="0.5" width="11" height="15" fill="#fce49a" stroke="#e6c462"/><path d="M10.5 9.5h2.5v6.5h-2.5z" fill="#ecc95a"/></svg>
<div class="t" style="left:451px;top:276px;color:#111">Tiktok VDO</div>
<div class="t" style="left:691px;top:276px;color:#6d6d6d">1/22/2026 4:53 PM</div>
<div class="t" style="left:835px;top:276px;color:#6d6d6d">File folder</div>
<div class="t" style="left:383px;top:587px;">Folder:</div>
<div class="a" style="left:424px;top:583px;width:756px;height:23px;background:#fff;border:1px solid #7a7a7a"></div>
<div class="t" style="left:430px;top:587px;">New Volume (E:)</div>
<div class="a" style="left:974px;top:612px;width:105px;height:24px;background:#e1e1e1;border:2px solid #0078d7"></div>
<div class="t" style="left:974px;top:616px;width:105px;text-align:center">Select Folder</div>
<div class="a" style="left:1093px;top:612px;width:86px;height:24px;background:#e1e1e1;border:1px solid #adadad"></div>
<div class="t" style="left:1093px;top:616px;width:86px;text-align:center">Cancel</div>
<svg class="a" style="left:1185px;top:637px;" width="12" height="12" viewBox="0 0 12 12"><rect x="8" y="2" width="2" height="2" fill="#bbb"/><rect x="5" y="5" width="2" height="2" fill="#bbb"/><rect x="8" y="5" width="2" height="2" fill="#bbb"/><rect x="2" y="8" width="2" height="2" fill="#bbb"/><rect x="5" y="8" width="2" height="2" fill="#bbb"/><rect x="8" y="8" width="2" height="2" fill="#bbb"/></svg>
<svg class="a" style="left:479px;top:338px;" width="14" height="22" viewBox="0 0 14 22"><path d="M1 1v16l4-4 3 7 2-1-3-7h6z" fill="#fff" stroke="#000" stroke-width="1"/></svg>
<div class="a" style="left:0;top:1040px;width:1920px;height:40px;background:linear-gradient(90deg,#041822 0%,#061521 40%,#050f1c 70%,#060d1a 100%)"></div>
<div class="a" style="left:0px;top:1040px;width:48px;height:40px;background:#021a24"></div>
<svg class="a" style="left:15px;top:1052px;" width="17" height="17" viewBox="0 0 17 17"><path d="M0 2.3L6.8 1.4v6.6H0zM7.7 1.3L17 0v8H7.7zM0 8.9h6.8v6.6L0 14.7zM7.7 8.9H17V17l-9.3-1.3z" fill="#fff"/></svg>
<div class="a" style="left:48px;top:1040px;width:343px;height:40px;background:#f0f0f0;border-top:1px solid #c4c4c4"></div>
<svg class="a" style="left:60px;top:1052px;" width="16" height="17" viewBox="0 0 16 17"><circle cx="10" cy="6" r="5" stroke="#111" stroke-width="1.3" fill="none"/><path d="M6.5 9.5L1 15.5" stroke="#111" stroke-width="1.4"/></svg>
<div class="t" style="left:88px;top:1053px;color:#333;font-size:14px">Type here to search</div>
<svg class="a" style="left:406px;top:1050px;" width="20" height="18" viewBox="0 0 20 18"><path d="M3 2.5h11M3 15.5h11" stroke="#fff" stroke-width="1.2"/><rect x="3.5" y="5.5" width="10" height="7" stroke="#fff" fill="none" stroke-width="1.2"/><path d="M17 2v3M17 7v4M17 13v3" stroke="#fff" stroke-width="1.4"/><rect x="15.5" y="5" width="3" height="2.5" fill="#fff"/></svg>
<svg class="a" style="left:454px;top:1047px;" width="26" height="26" viewBox="0 0 26 26"><defs><linearGradient id="eg" x1="1" y1="0" x2="0" y2="1"><stop offset="0" stop-color="#5fe08a"/><stop offset="0.45" stop-color="#2fb8d8"/><stop offset="1" stop-color="#1560c8"/></linearGradient></defs><circle cx="13" cy="13" r="12" fill="url(#eg)"/><path d="M7 13.5c0-3.5 3-6 6.5-6 3 0 5.5 2 5.5 4.5h-6.5c-1.2 0-2 .8-2 2 0 3 3 5.5 7 5.5 1.5 0 3-.4 4-1-1.8 3.2-5 5.5-9 5.5C8 24 4 20 4 15c0-.5 0-1 .1-1.5z" fill="#0e4fa8"/><path d="M9.5 13.5c0-2 2-3.5 4-3.5" stroke="#0a2f60" stroke-width="0" fill="none"/></svg>
<svg class="a" style="left:502px;top:1048px;" width="26" height="22" viewBox="0 0 26 22"><path d="M1 1h8l2 2h14v18H1z" fill="#e9b73a"/><rect x="1" y="5" width="24" height="16" fill="#f7d35a"/><path d="M8 21v-7h10v7h-3v-4h-4v4z" fill="#3b8fe0"/></svg>
<svg class="a" style="left:552px;top:1047px;" width="28" height="28" viewBox="0 0 28 28"><circle cx="13" cy="13" r="12" fill="#db4437"/><path d="M13 13L23.4 7A12 12 0 0 1 13 25z" fill="#f4c20d"/><path d="M13 13L13 25A12 12 0 0 1 2.6 7z" fill="#0f9d58"/><circle cx="13" cy="13" r="5.2" fill="#fff"/><circle cx="13" cy="13" r="4.2" fill="#4285f4"/><circle cx="20" cy="19" r="7" fill="#6aa84f"/><text x="20" y="22.5" text-anchor="middle" font-size="9" font-family="Liberation Sans" fill="#fff">SJ</text></svg>
<svg class="a" style="left:601px;top:1047px;" width="26" height="26" viewBox="0 0 26 26"><rect x="2" y="1" width="10" height="22" fill="#3a9ae8" stroke="#bfe0f7" stroke-width="0.8"/><path d="M2 6h10M2 10h10" stroke="#bfe0f7" stroke-width="0.8"/><rect x="8" y="14" width="17" height="10" fill="#6f8aa0" stroke="#d6e3ee" stroke-width="1"/><rect x="13" y="11.5" width="7" height="3" fill="none" stroke="#d6e3ee"/><path d="M9 18h15" stroke="#d6e3ee"/></svg>
<svg class="a" style="left:649px;top:1048px;" width="26" height="24" viewBox="0 0 26 24"><rect x="4" y="1" width="20" height="16" fill="#cfd6dc" stroke="#8a949c"/><rect x="6" y="3" width="16" height="12" fill="#eef4f8"/><path d="M7 12l3-1 2-6 2 8 2-5 2 4 3-1" stroke="#3a7bd0" fill="none"/><path d="M0 6h4v12H0z" fill="#9aa4ac"/><ellipse cx="14" cy="21" rx="6" ry="2" fill="#c8d0d8"/></svg>
<svg class="a" style="left:698px;top:1047px;" width="26" height="26" viewBox="0 0 26 26"><circle cx="13" cy="13" r="12" fill="#e6e0d6"/><circle cx="13" cy="13" r="9.5" fill="#f4efe8" stroke="#cfc6b8"/><path d="M8 6l6 9" stroke="#c62828" stroke-width="1.6"/><path d="M15 14l3-6" stroke="#e07b39" stroke-width="1.6"/></svg>
<svg class="a" style="left:750px;top:1047px;" width="18" height="26" viewBox="0 0 18 26"><path d="M15 1C10 3 5 9 4 17l-1 2 2 1c5-5 9-11 10-19z" fill="#4d72b8" stroke="#1b2a44" stroke-width="0.8"/><path d="M4 16c0 2 1 3 2 2" stroke="#fff" stroke-width="1.2" fill="none"/><path d="M13 4L5 20 4 24" stroke="#111" stroke-width="1.2" fill="none"/></svg>
<svg class="a" style="left:796px;top:1047px;" width="28" height="26" viewBox="0 0 28 26"><path d="M9 2h15l-2 21H3z" fill="#e8eef0"/><path d="M8 2h14l-4 20H3z" fill="#4fb3c8"/><path d="M8 2h14l-3 14z" fill="#a9e0ea"/><path d="M24 4l2 18-8 2" fill="#f2f2ea" stroke="#c9c79a" stroke-width="0.8"/></svg>
<svg class="a" style="left:845px;top:1048px;" width="26" height="24" viewBox="0 0 26 24"><path d="M1 12L15 2l-4 10 4 10z" fill="#ea2c68"/><path d="M11 12l8-5v10z" fill="#4fb6e8"/></svg>
<div class="a" style="left:884px;top:1040px;width:48px;height:40px;background:#38414b"></div>
<svg class="a" style="left:898px;top:1047px;" width="18" height="26" viewBox="0 0 18 26"><path d="M15 1C10 3 5 9 4 17l-1 2 2 1c5-5 9-11 10-19z" fill="#6e93d0" stroke="#1b2a44" stroke-width="0.8"/><path d="M4 16c0 2 1 3 2 2" stroke="#fff" stroke-width="1.2" fill="none"/><path d="M13 4L5 20 4 25" stroke="#111" stroke-width="1.3" fill="none"/></svg>
<div class="a" style="left:495px;top:1078px;width:40px;height:2px;background:#76b9ed"></div>
<div class="a" style="left:545px;top:1078px;width:40px;height:2px;background:#76b9ed"></div>
<div class="a" style="left:593px;top:1078px;width:40px;height:2px;background:#76b9ed"></div>
<div class="a" style="left:642px;top:1078px;width:40px;height:2px;background:#76b9ed"></div>
<div class="a" style="left:691px;top:1078px;width:40px;height:2px;background:#76b9ed"></div>
<div class="a" style="left:740px;top:1078px;width:40px;height:2px;background:#76b9ed"></div>
<div class="a" style="left:789px;top:1078px;width:40px;height:2px;background:#76b9ed"></div>
<div class="a" style="left:838px;top:1078px;width:40px;height:2px;background:#76b9ed"></div>
<div class="a" style="left:884px;top:1078px;width:48px;height:2px;background:#99cdf5"></div>
<svg class="a" style="left:1711px;top:1054px;" width="14" height="9" viewBox="0 0 14 9"><path d="M1 8l6-6 6 6" stroke="#fff" stroke-width="1.2" fill="none"/></svg>
<svg class="a" style="left:1733px;top:1051px;" width="20" height="18" viewBox="0 0 20 18"><path d="M1.5 3.5l15-2v12l-15 1z" stroke="#fff" fill="none" stroke-width="1.1"/><path d="M6 8c0-2 2-3 4-2M11 9c0 2-2 3-4 2" stroke="#fff" fill="none"/><circle cx="13.5" cy="14" r="3" fill="#e81123"/></svg>
<svg class="a" style="left:1757px;top:1051px;" width="18" height="17" viewBox="0 0 18 17"><rect x="5.5" y="2.5" width="12" height="9" stroke="#fff" fill="none" stroke-width="1.1"/><path d="M11.5 11.5v3M7 15h9M1.5 2.5h5v4h-5zM2.5 6.5v9" stroke="#fff" fill="none"/></svg>
<svg class="a" style="left:1781px;top:1051px;" width="20" height="17" viewBox="0 0 20 17"><path d="M1.5 6h3l4-3.5v12l-4-3.5h-3z" stroke="#fff" fill="none" stroke-width="1.1"/><circle cx="14.5" cy="12" r="3.6" fill="#e81123"/><path d="M13 10.5l3 3M16 10.5l-3 3" stroke="#fff"/></svg>
<div class="t" style="left:1790px;top:1043px;width:90px;text-align:center;color:#fff;font-size:12px;letter-spacing:-0.2px">4:55 PM</div>
<div class="t" style="left:1790px;top:1061px;width:90px;text-align:center;color:#fff;font-size:12px;letter-spacing:-0.2px">1/22/2026</div>
<svg class="a" style="left:1877px;top:1050px;" width="26" height="26" viewBox="0 0 26 26"><path d="M2 2h16v12H10l-4 4v-4H2z" fill="#fff"/><path d="M5 6h10M5 9h10" stroke="#333"/><circle cx="17" cy="18" r="5.5" fill="#222" stroke="#777"/><text x="17" y="21.5" text-anchor="middle" font-size="9" font-family="Liberation Sans" font-weight="bold" fill="#fff">1</text></svg>
<div class="a" style="left:1915px;top:1040px;width:1px;height:40px;background:#555"></div>
<div class="t" style="left:1599px;top:951px;color:rgba(120,120,120,0.55);font-size:20px;line-height:24px;top:946px">Activate Windows</div>
<div class="t" style="left:1599px;top:973px;color:rgba(120,120,120,0.55);font-size:14.75px">Go to Settings to activate Windows.</div>
</body></html>
